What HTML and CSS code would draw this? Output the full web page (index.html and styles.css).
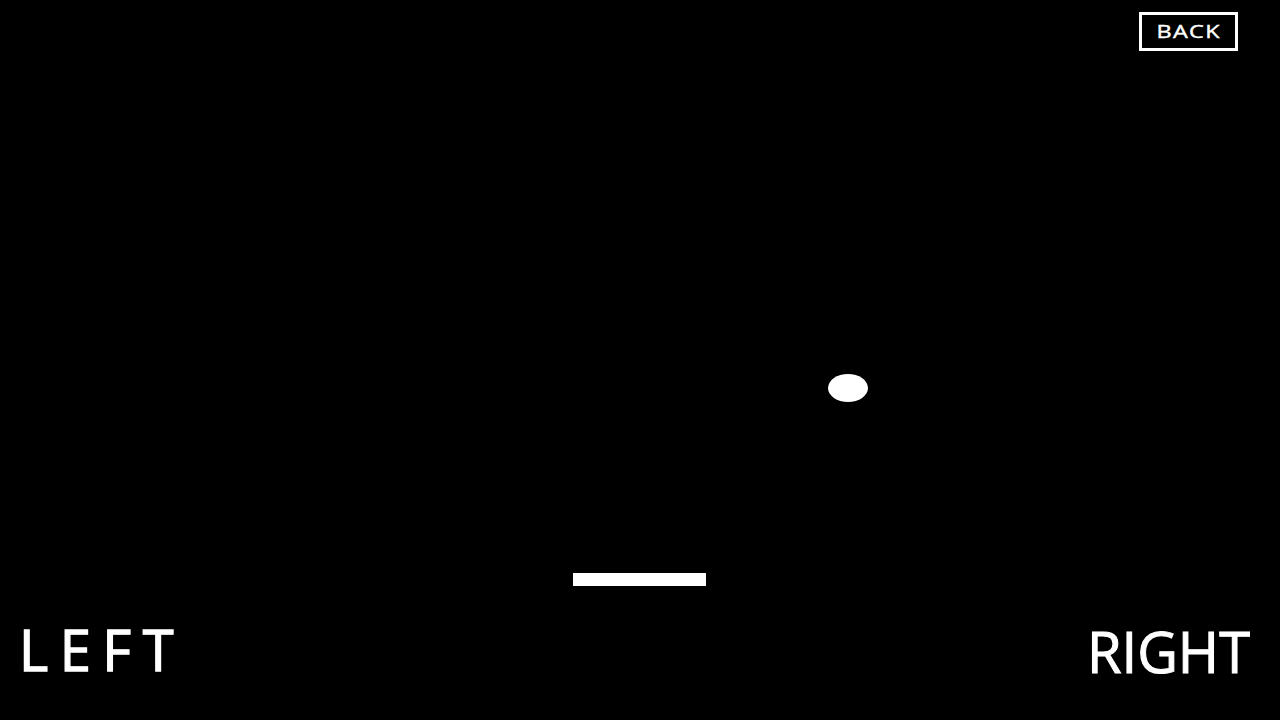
FILE: index.html
```html
<!DOCTYPE html>
<html>
<head>
<meta charset="utf-8">
<link rel="stylesheet" href="styles.css">
</head>
<body>
<div class="screen">
  <header class="top">
    <button class="back"><span class="back-label">BACK</span></button>
  </header>
  <main class="field">
    <div class="ball"></div>
    <div class="paddle"></div>
  </main>
  <footer class="controls">
    <span class="ctl left">LEFT</span>
    <span class="ctl right">RIGHT</span>
  </footer>
</div>
</body>
</html>
```
FILE: styles.css
```css
html, body {
  margin: 0;
  padding: 0;
  background: #000;
}
.screen {
  width: 1280px;
  height: 720px;
  display: flex;
  flex-direction: column;
  font-family: "Open Sans", "Noto Sans", sans-serif;
  color: #fff;
  overflow: hidden;
}
.top {
  display: flex;
  justify-content: flex-end;
  padding: 12px 42px 0 0;
}
.back {
  box-sizing: border-box;
  width: 99px;
  height: 39px;
  background: #000;
  color: #fff;
  border: 3px solid #fff;
  font-family: "Open Sans", "Noto Sans", sans-serif;
  font-size: 18px;
  padding: 0 0 2px 0;
  line-height: 1;
  display: flex;
  align-items: center;
  justify-content: center;
}
.back-label {
  display: inline-block;
  letter-spacing: 1px;
  transform: scaleX(1.3);
  -webkit-text-stroke: 0.4px #fff;
}
.field {
  position: relative;
  flex: 1;
}
.ball {
  position: absolute;
  left: 828px;
  top: 323px;
  width: 40px;
  height: 28px;
  border-radius: 50%;
  background: #fff;
}
.paddle {
  position: absolute;
  left: 573px;
  top: 522px;
  width: 133px;
  height: 13px;
  background: #fff;
}
.controls {
  display: flex;
  justify-content: space-between;
  align-items: flex-start;
  padding: 0 30px 0 19px;
  height: 108px;
}
.ctl {
  font-size: 56px;
  line-height: 1;
  -webkit-text-stroke: 1px #fff;
}
.left {
  letter-spacing: 11.5px;
  margin-top: 9px;
  -webkit-text-stroke: 1.3px #fff;
}
.right {
  margin-top: 11px;
}
```
